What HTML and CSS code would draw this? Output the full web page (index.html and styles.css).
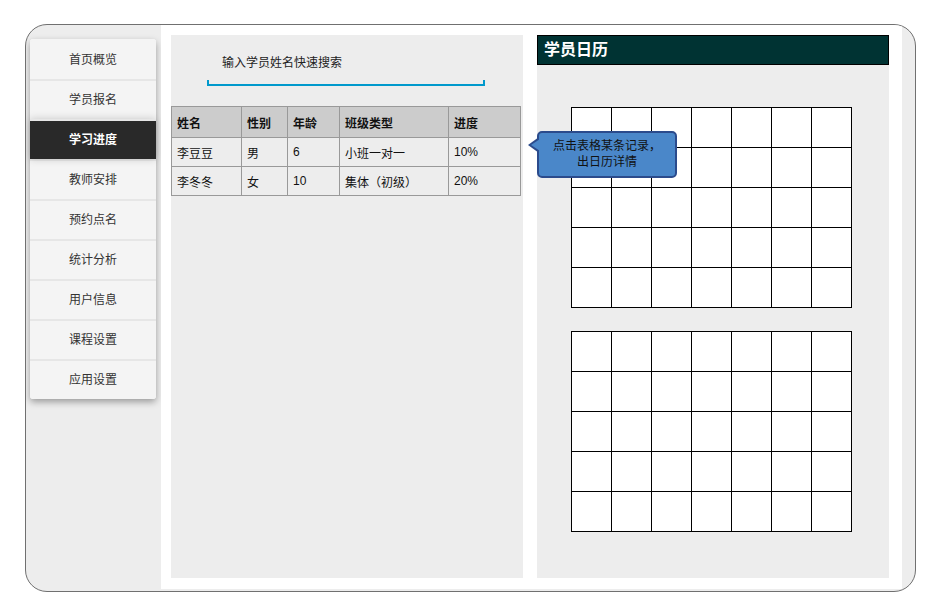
FILE: index.html
```html
<!DOCTYPE html>
<html lang="zh">
<head>
<meta charset="utf-8">
<link rel="stylesheet" href="styles.css">
</head>
<body>
<div class="frame">
  <aside class="side">
    <ul class="menu">
      <li>首页概览</li>
      <li>学员报名</li>
      <li class="active">学习进度</li>
      <li>教师安排</li>
      <li>预约点名</li>
      <li>统计分析</li>
      <li>用户信息</li>
      <li>课程设置</li>
      <li>应用设置</li>
    </ul>
  </aside>
  <main class="main">
    <section class="panel left">
      <div class="search">
        <div class="search-text">输入学员姓名快速搜索</div>
        <div class="search-line"></div>
      </div>
      <table class="grid">
        <thead>
          <tr><th class="c1">姓名</th><th class="c2">性别</th><th class="c3">年龄</th><th class="c4">班级类型</th><th class="c5">进度</th></tr>
        </thead>
        <tbody>
          <tr><td>李豆豆</td><td>男</td><td>6</td><td>小班一对一</td><td>10%</td></tr>
          <tr><td>李冬冬</td><td>女</td><td>10</td><td>集体（初级）</td><td>20%</td></tr>
        </tbody>
      </table>
    </section>
    <section class="panel right">
      <h2 class="cal-title">学员日历</h2>
      <div class="cal">
        <div class="month"></div>
        <div class="month"></div>
      </div>
    </section>
    <div class="callout">点击表格某条记录，<br>出日历详情</div>
  </main>
</div>
<script>
document.querySelectorAll('.month').forEach(function(m){
  for (var i = 0; i < 35; i++) { var c = document.createElement('div'); c.className = 'day'; m.appendChild(c); }
});
</script>
</body>
</html>
```
FILE: styles.css
```css
* { box-sizing: border-box; }
html, body { margin: 0; padding: 0; background: #fff; }
body {
  font-family: "Liberation Sans", "Noto Sans CJK SC", sans-serif;
  font-size: 12px;
  color: #222;
}
.frame {
  margin: 24px 0 0 25px;
  width: 891px;
  height: 568px;
  border: 1px solid #707070;
  border-radius: 22px;
  background: #ededed;
  display: flex;
  overflow: hidden;
}
.side {
  width: 135px;
  flex: none;
  padding: 14px 0 0 4px;
}
.menu {
  list-style: none;
  margin: 0;
  padding: 0;
  width: 126px;
  background: #f4f4f4;
  border-radius: 3px;
  box-shadow: 0 3px 7px rgba(0,0,0,0.35);
}
.menu li {
  height: 40px;
  padding-top: 1px;
  line-height: 37px;
  text-align: center;
  background: #f4f4f4;
  color: #333;
  border-top: 2px solid #e6e6e6;
}
.menu li:first-child { border-top-color: #f4f4f4; border-radius: 3px 3px 0 0; }
.menu li:last-child { border-radius: 0 0 3px 3px; }
.menu li.active {
  background: #292929;
  border-top-color: #e6e6e6;
  color: #fff;
  font-weight: bold;
  position: relative;
  box-shadow: 0 0 8px rgba(0,0,0,0.18);
}
.main {
  position: relative;
  width: 741px;
  height: 564px;
  flex: none;
  background: #fff;
  padding: 10px 13px 11px 10px;
  display: flex;
  gap: 14px;
}
.panel {
  width: 352px;
  background: #ededed;
}
.search { padding: 21px 0 0 36px; height: 71px; }
.search-text { padding-left: 15px; line-height: 14px; color: #222; }
.search-line {
  margin-top: 10px;
  width: 278px;
  height: 6px;
  border: 2px solid #0099cc;
  border-top: none;
}
.grid {
  border-collapse: collapse;
  width: 349px;
  table-layout: fixed;
}
.grid th, .grid td {
  border: 1px solid #999;
  text-align: left;
  padding: 0 0 0 5px;
  font-size: 12px;
}
.grid th { background: #cccccc; height: 31px; font-weight: bold; color: #111; }
.grid td { height: 29px; background: #ededed; color: #111; }
.c1 { width: 70px; }
.c2 { width: 46px; }
.c3 { width: 52px; }
.c4 { width: 109px; }
.c5 { width: 72px; }
.cal-title {
  margin: 0;
  width: 352px;
  height: 30px;
  background: #003333;
  border: 1px solid #000;
  color: #fff;
  font-size: 16px;
  font-weight: bold;
  line-height: 28px;
  padding-left: 6px;
}
.cal { padding: 42px 0 0 34px; display: flex; flex-direction: column; gap: 23px; }
.month {
  width: 281px;
  display: grid;
  grid-template-columns: repeat(7, 40px);
  grid-auto-rows: 40px;
  border-top: 1px solid #000;
  border-left: 1px solid #000;
  background: #fff;
}
.day { border-right: 1px solid #000; border-bottom: 1px solid #000; }
.callout {
  position: absolute;
  left: 376px;
  top: 106px;
  width: 140px;
  height: 47px;
  background: #4a87c9;
  border: 2px solid #2b4b8c;
  border-radius: 5px;
  text-align: center;
  line-height: 16px;
  padding-top: 5px;
  color: #111;
  font-size: 12px;
}
.callout::before {
  content: "";
  position: absolute;
  left: -11px;
  top: 4px;
  border-style: solid;
  border-width: 8px 11px 8px 0;
  border-color: transparent #2b4b8c transparent transparent;
}
.callout::after {
  content: "";
  position: absolute;
  left: -8px;
  top: 6px;
  border-style: solid;
  border-width: 6px 9px 6px 0;
  border-color: transparent #4a87c9 transparent transparent;
}
```
